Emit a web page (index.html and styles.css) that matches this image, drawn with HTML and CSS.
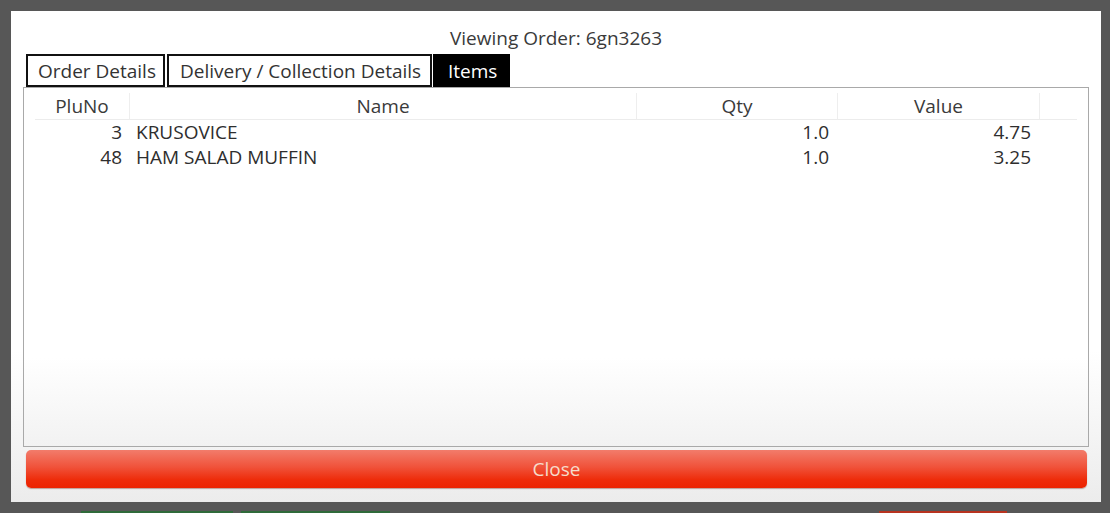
FILE: index.html
```html
<!DOCTYPE html>
<html>
<head>
<meta charset="utf-8">
<link rel="stylesheet" href="styles.css">
</head>
<body>
<div class="screen">
  <div class="dialog">
    <div class="title">Viewing Order: 6gn3263</div>
    <div class="tabs">
      <div class="tab">Order Details</div>
      <div class="tab">Delivery / Collection Details</div>
      <div class="tab active">Items</div>
    </div>
    <div class="panel">
      <div class="grid">
        <div class="hcell">PluNo</div>
        <div class="hcell">Name</div>
        <div class="hcell">Qty</div>
        <div class="hcell">Value</div>
        <div class="hcell last"></div>

        <div class="cell num">3</div>
        <div class="cell name">KRUSOVICE</div>
        <div class="cell num">1.0</div>
        <div class="cell num">4.75</div>
        <div class="cell"></div>

        <div class="cell num">48</div>
        <div class="cell name">HAM SALAD MUFFIN</div>
        <div class="cell num">1.0</div>
        <div class="cell num">3.25</div>
        <div class="cell"></div>
      </div>
    </div>
    <button class="close">Close</button>
  </div>
  <div class="below">
    <span class="sliver green g1"></span>
    <span class="sliver green g2"></span>
    <span class="sliver red r1"></span>
  </div>
</div>
</body>
</html>
```
FILE: styles.css
```css
html, body {
  margin: 0;
  padding: 0;
}
body {
  background: #575757;
  font-family: "Open Sans", "Noto Sans", sans-serif;
  color: #333;
  width: 1110px;
  height: 513px;
  overflow: hidden;
}
.screen {
  display: flex;
  flex-direction: column;
  height: 513px;
}
.dialog {
  margin: 11px 9px 0 11px;
  height: 491px;
  box-sizing: border-box;
  background: linear-gradient(#ffffff 0, #ffffff 340px, #ececec 491px);
  display: flex;
  flex-direction: column;
}
.title {
  height: 43px;
  box-sizing: border-box;
  padding-top: 14px;
  text-align: center;
  font-size: 19px;
  line-height: 26px;
  color: #3a3a3a;
}
.tabs {
  display: flex;
  margin-left: 15px;
  height: 33px;
}
.tab {
  box-sizing: border-box;
  height: 33px;
  border: 2px solid #111;
  background: #fff;
  font-size: 19px;
  line-height: 30px;
  padding: 0 0 0 10px;
  color: #333;
  white-space: nowrap;
}
.tab + .tab {
  margin-left: 2px;
}
.tab:nth-child(1) { width: 139px; }
.tab:nth-child(2) { width: 265px; padding-left: 11px; }
.tab.active {
  margin-left: 1px;
  width: 77px;
  background: #000;
  border-color: #000;
  color: #fff;
  padding-left: 13px;
}
.panel {
  margin: 0 12px;
  height: 360px;
  box-sizing: border-box;
  border: 1px solid #a9a9a9;
  background: linear-gradient(#ffffff 0, #ffffff 270px, #f2f2f2 358px);
  padding: 5px 11px 0 11px;
}
.grid {
  display: grid;
  grid-template-columns: 95px 507px 201px 202px 37px;
  grid-template-rows: 27px 25px 25px;
  font-size: 19px;
}
.hcell {
  text-align: center;
  line-height: 26px;
  border-right: 1px solid #eeeeee;
  border-bottom: 1px solid #ececec;
  background: #fff;
  color: #3a3a3a;
}
.hcell.last {
  border-right: none;
}
.cell {
  line-height: 25px;
  color: #2e2e2e;
  white-space: nowrap;
}
.cell.num {
  text-align: right;
  padding-right: 8px;
}
.cell.name {
  padding-left: 6px;
}
.grid .cell:nth-child(5n+3),
.grid .cell:nth-child(5n+4) {
  padding-right: 9px;
}
.close {
  margin: 3px 14px 0 15px;
  height: 38px;
  border: none;
  border-radius: 5px;
  background: linear-gradient(#f27c6b 0%, #f0523a 45%, #ee2a08 80%, #ec2200 100%);
  box-shadow: 0 1px 1px rgba(120, 40, 20, 0.4);
  color: #f6dccb;
  font-family: "Open Sans", "Noto Sans", sans-serif;
  font-size: 19px;
  line-height: 38px;
  padding: 0;
}
.below {
  flex: 1;
  display: flex;
  align-items: flex-end;
}
.sliver {
  display: block;
  height: 2px;
}
.green { background: #2f6a3a; }
.red { background: #b8331f; }
.g1 { margin-left: 81px; width: 152px; }
.g2 { margin-left: 8px; width: 149px; }
.r1 { margin-left: 489px; width: 128px; }
```
